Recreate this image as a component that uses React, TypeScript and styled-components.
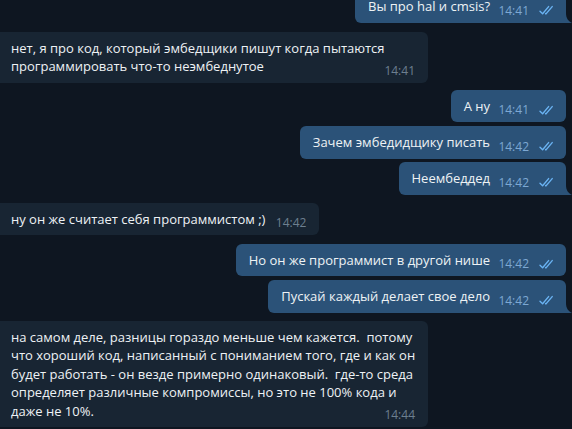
import React from "react";
import styled, { createGlobalStyle, css } from "styled-components";

const Global = createGlobalStyle`
  html, body { margin: 0; padding: 0; background: #0e1621; }
  body { width: 572px; height: 429px; overflow: hidden; font-family: "Open Sans", "Noto Sans", sans-serif; }
`;

const Chat = styled.div`
  display: flex;
  flex-direction: column;
  width: 572px;
  height: 429px;
  overflow: hidden;
  background: #0e1621;
`;

const Row = styled.div<{ $out?: boolean; $gap: number }>`
  display: flex;
  justify-content: ${(p) => (p.$out ? "flex-end" : "flex-start")};
  padding: ${(p) => (p.$out ? "0 6px 0 0" : "0")};
  margin-top: ${(p) => p.$gap}px;
`;

const Bubble = styled.div<{ $out?: boolean; $tail?: boolean }>`
  position: relative;
  max-width: ${(p) => (p.$out ? "420px" : "405px")};
  padding: 7px 12px 7px ${(p) => (p.$out ? "13px" : "11px")};
  border-radius: 6px;
  background: ${(p) => (p.$out ? "#2b5278" : "#182533")};
  color: #eef2f5;
  font-size: 13px;
  line-height: 18.5px;
  white-space: pre-wrap;
  ${(p) =>
    !p.$out &&
    css`
      border-top-left-radius: 0;
      border-bottom-left-radius: 0;
    `}
  ${(p) =>
    p.$tail &&
    css`
      border-bottom-right-radius: 0;
    `}
`;

const Spacer = styled.span<{ $out?: boolean }>`
  display: inline-block;
  width: ${(p) => (p.$out ? "64px" : "42px")};
  height: 1px;
`;

const Meta = styled.span<{ $out?: boolean }>`
  position: absolute;
  right: ${(p) => (p.$out ? "11px" : "13px")};
  bottom: 5px;
  display: flex;
  align-items: center;
  gap: 10px;
  font-size: 12px;
  line-height: 14px;
  color: ${(p) => (p.$out ? "#7da8d3" : "#6d7f8f")};
`;

const Tail = styled.svg`
  position: absolute;
  right: -6px;
  bottom: 0;
`;

const Checks = () => (
  <svg width="16" height="11" viewBox="0 0 16 11" fill="none">
    <path d="M1 6.2 L3.6 8.8 L9.6 1.6" stroke="#6ab3f3" strokeWidth="1.4" strokeLinecap="round" strokeLinejoin="round" />
    <path d="M6.6 8.6 L7 8.9 L13.2 1.6" stroke="#6ab3f3" strokeWidth="1.4" strokeLinecap="round" strokeLinejoin="round" />
  </svg>
);

type Msg = { out: boolean; text: string; time: string; gap: number; tail?: boolean };

const messages: Msg[] = [
  { out: true, text: "Вы про hal и cmsis?", time: "14:41", gap: -10, tail: true },
  { out: false, text: "нет, я про код, который эмбедщики пишут когда пытаются программировать что-то неэмбеднутое", time: "14:41", gap: 9 },
  { out: true, text: "А ну", time: "14:41", gap: 7 },
  { out: true, text: "Зачем эмбедидщику писать", time: "14:42", gap: 4 },
  { out: true, text: "Неембеддед", time: "14:42", gap: 3.5, tail: true },
  { out: false, text: "ну он же считает себя программистом ;)", time: "14:42", gap: 8 },
  { out: true, text: "Но он же программист в другой нише", time: "14:42", gap: 8.5 },
  { out: true, text: "Пускай каждый делает свое дело", time: "14:42", gap: 4, tail: true },
  {
    out: false,
    text: "на самом деле, разницы гораздо меньше чем кажется.  потому что хороший код, написанный с пониманием того, где и как он будет работать - он везде примерно одинаковый.  где-то среда определяет различные компромиссы, но это не 100% кода и даже не 10%.",
    time: "14:44",
    gap: 8,
  },
];

export default function App() {
  return (
    <Chat>
      <Global />
      {messages.map((m, i) => (
        <Row key={i} $out={m.out} $gap={m.gap}>
          <Bubble $out={m.out} $tail={m.tail}>
            {m.text}
            <Spacer $out={m.out} />
            <Meta $out={m.out}>
              <span>{m.time}</span>
              {m.out && <Checks />}
            </Meta>
            {m.tail && (
              <Tail width="6" height="10" viewBox="0 0 6 10">
                <path d="M0 0 C0 5 2 8 6 10 L0 10 Z" fill="#2b5278" />
              </Tail>
            )}
          </Bubble>
        </Row>
      ))}
    </Chat>
  );
}
